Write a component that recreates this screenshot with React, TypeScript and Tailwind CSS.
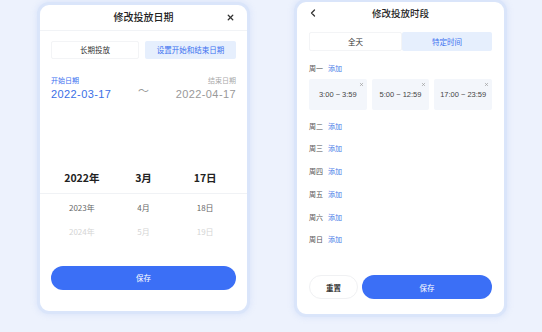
import { ChevronLeft, X } from "lucide-react";

const font = { fontFamily: '"Noto Sans CJK SC", "Noto Sans", sans-serif' };
const latin = { fontFamily: '"Liberation Sans", sans-serif' };

const days = ["周二", "周三", "周四", "周五", "周六", "周日"];
const chips = ["3:00 ~ 3:59", "5:00 ~ 12:59", "17:00 ~ 23:59"];

function DateCard() {
  return (
    <div className="mt-[2px] flex h-[312px] w-[213px] flex-col rounded-[12px] border-[3px] border-[#dae5fa] bg-white shadow-[0_0_6px_rgba(150,180,240,0.25)]">
      <div className="relative flex h-[26px] shrink-0 items-center justify-center border-b border-[#f1f3f6] pb-[2px]">
        <span className="text-[10px] font-medium leading-none text-[#222]">修改投放日期</span>
        <X size={9} strokeWidth={3.5} className="absolute right-[12px] top-[8px] text-[#333]" />
      </div>
      <div className="mx-[11px] mt-[10px] flex h-[18px] gap-[6px]">
        <div className="flex flex-1 items-center justify-center rounded-[2px] border border-[#f3f4f6] text-[7.5px] text-[#333]">长期投放</div>
        <div className="flex w-[91px] items-center justify-center rounded-[2px] bg-[#e6effd] text-[7.5px] text-[#3b6ff0]">设置开始和结束日期</div>
      </div>
      <div className="mx-[11px] mt-[16px] flex items-end justify-between">
        <div className="flex flex-col">
          <span className="text-[7px] leading-[10px] text-[#3b6ff0]">开始日期</span>
          <span className="mt-[2px] text-[11px] leading-[15px] tracking-[0.4px] text-[#3a6fe6]" style={latin}>2022-03-17</span>
        </div>
        <span className="mb-[4px] text-[11px] text-[#999]">～</span>
        <div className="flex flex-col items-end">
          <span className="text-[7px] leading-[10px] text-[#aaa]">结束日期</span>
          <span className="mt-[2px] text-[11px] leading-[15px] tracking-[0.4px] text-[#999]" style={latin}>2022-04-17</span>
        </div>
      </div>
      <div className="mt-[60px] grid h-[32px] grid-cols-3 items-center border-b border-[#f0f2f5] px-[11px] text-[10.5px] font-bold text-[#222]">
        <span className="text-center">2022年</span>
        <span className="text-center">3月</span>
        <span className="text-center">17日</span>
      </div>
      <div className="mt-[6px] grid h-[16px] grid-cols-3 items-center px-[11px] text-[8px] text-[#666]">
        <span className="text-center">2023年</span>
        <span className="text-center">4月</span>
        <span className="text-center">18日</span>
      </div>
      <div className="mt-[8px] grid h-[16px] grid-cols-3 items-center px-[11px] text-[8px] text-[#d4d4d4]">
        <span className="text-center">2024年</span>
        <span className="text-center">5月</span>
        <span className="text-center">19日</span>
      </div>
      <div className="mx-[11px] mt-[26px] flex h-[24px] items-center justify-center rounded-full bg-[#3b6ff6] text-[7.5px] text-white">保存</div>
    </div>
  );
}

function TimeCard() {
  return (
    <div className="mt-[-1px] flex h-[318px] w-[213px] flex-col rounded-[12px] border-[3px] border-[#dae5fa] bg-white shadow-[0_0_6px_rgba(150,180,240,0.25)]">
      <div className="relative flex h-[22px] shrink-0 items-center justify-center pt-[1px]">
        <ChevronLeft size={12} strokeWidth={2.5} className="absolute left-[10px] top-[5px] text-[#333]" />
        <span className="text-[9.5px] font-medium leading-none text-[#222]">修改投放时段</span>
      </div>
      <div className="mx-[12px] mt-[8px] flex h-[19px]">
        <div className="flex flex-1 items-center justify-center rounded-[2px] border border-[#f3f4f6] text-[7.5px] text-[#333]">全天</div>
        <div className="flex w-[90px] items-center justify-center rounded-[2px] bg-[#e6effd] text-[7.5px] text-[#3b6ff0]">特定时间</div>
      </div>
      <div className="mx-[12px] mt-[11px] flex h-[12px] items-center gap-[5px] text-[7px]">
        <span className="text-[#555]">周一</span>
        <span className="text-[#4a7be8]">添加</span>
      </div>
      <div className="mx-[12px] mt-[5px] flex gap-[5px]">
        {chips.map((c) => (
          <div key={c} className="relative flex h-[31px] flex-1 items-center justify-center whitespace-nowrap rounded-[2px] bg-[#f3f6fb] text-[7.5px] text-[#444]" style={latin}>
            {c}
            <X size={5} strokeWidth={3} className="absolute right-[3px] top-[3px] text-[#999]" />
          </div>
        ))}
      </div>
      <div className="mx-[12px] mt-[10px] flex flex-col gap-[10.7px]">
        {days.map((d) => (
          <div key={d} className="flex h-[12px] items-center gap-[5px] text-[7px]">
            <span className="text-[#555]">{d}</span>
            <span className="text-[#4a7be8]">添加</span>
          </div>
        ))}
      </div>
      <div className="mx-[12px] mt-[30px] flex h-[24px] gap-[4px]">
        <div className="flex w-[49px] items-center justify-center rounded-full border border-[#f0f1f3] text-[7.5px] font-bold text-[#333]">重置</div>
        <div className="flex flex-1 items-center justify-center rounded-full bg-[#3b6ff6] text-[7.5px] text-white">保存</div>
      </div>
    </div>
  );
}

export default function App() {
  return (
    <div className="flex h-[332px] w-[542px] overflow-hidden bg-[#edf2fd] pl-[37px]" style={font}>
      <DateCard />
      <div className="w-[44px] shrink-0" />
      <TimeCard />
    </div>
  );
}
